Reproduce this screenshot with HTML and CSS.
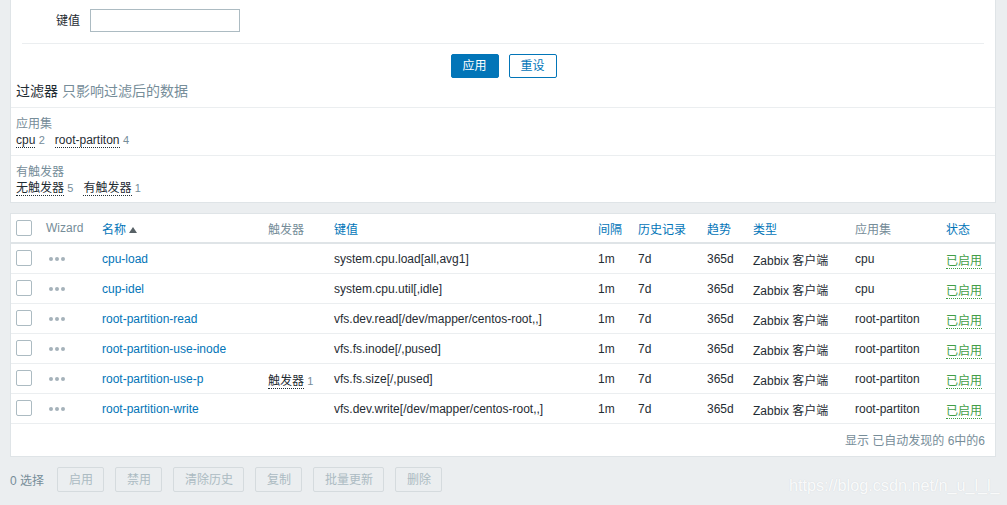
FILE: index.html
```html
<!DOCTYPE html>
<html lang="zh">
<head>
<meta charset="utf-8">
<title>监控项</title>
<link rel="stylesheet" href="styles.css">
</head>
<body>
<div class="page">
  <section class="filter-panel">
    <div class="form-row">
      <label class="form-label">键值</label>
      <input class="form-input" type="text">
    </div>
    <div class="form-sep"></div>
    <div class="form-buttons">
      <button class="btn btn-primary">应用</button>
      <button class="btn btn-alt">重设</button>
    </div>
    <div class="filter-title"><span class="dark">过滤器</span> <span class="muted">只影响过滤后的数据</span></div>
    <div class="subfilter">
      <div class="sub-label">应用集</div>
      <div class="sub-items">
        <span class="sub-item"><span class="dotted">cpu</span> <sup class="cnt">2</sup></span>
        <span class="sub-item"><span class="dotted">root-partiton</span> <sup class="cnt">4</sup></span>
      </div>
    </div>
    <div class="subfilter">
      <div class="sub-label">有触发器</div>
      <div class="sub-items">
        <span class="sub-item"><span class="dotted">无触发器</span> <sup class="cnt">5</sup></span>
        <span class="sub-item"><span class="dotted">有触发器</span> <sup class="cnt">1</sup></span>
      </div>
    </div>
  </section>

  <section class="list-panel">
    <table class="list">
      <colgroup>
        <col class="w-cb"><col class="w-wiz"><col class="w-name"><col class="w-trig"><col class="w-key"><col class="w-int"><col class="w-hist"><col class="w-trend"><col class="w-type"><col class="w-app"><col class="w-status">
      </colgroup>
      <thead>
        <tr>
          <th><span class="cb"></span></th>
          <th class="gray">Wizard</th>
          <th class="blue">名称<span class="arrow"></span></th>
          <th class="gray">触发器</th>
          <th class="blue">键值</th>
          <th class="blue">间隔</th>
          <th class="blue">历史记录</th>
          <th class="blue">趋势</th>
          <th class="blue">类型</th>
          <th class="gray">应用集</th>
          <th class="blue">状态</th>
        </tr>
      </thead>
      <tbody>
        <tr>
          <td class="c-cb"><span class="cb"></span></td><td><span class="dots"><i></i><i></i><i></i></span></td>
          <td class="link">cpu-load</td><td></td><td>system.cpu.load[all,avg1]</td>
          <td>1m</td><td>7d</td><td>365d</td><td>Zabbix 客户端</td><td>cpu</td><td><span class="status">已启用</span></td>
        </tr>
        <tr>
          <td class="c-cb"><span class="cb"></span></td><td><span class="dots"><i></i><i></i><i></i></span></td>
          <td class="link">cup-idel</td><td></td><td>system.cpu.util[,idle]</td>
          <td>1m</td><td>7d</td><td>365d</td><td>Zabbix 客户端</td><td>cpu</td><td><span class="status">已启用</span></td>
        </tr>
        <tr>
          <td class="c-cb"><span class="cb"></span></td><td><span class="dots"><i></i><i></i><i></i></span></td>
          <td class="link">root-partition-read</td><td></td><td>vfs.dev.read[/dev/mapper/centos-root,,]</td>
          <td>1m</td><td>7d</td><td>365d</td><td>Zabbix 客户端</td><td>root-partiton</td><td><span class="status">已启用</span></td>
        </tr>
        <tr>
          <td class="c-cb"><span class="cb"></span></td><td><span class="dots"><i></i><i></i><i></i></span></td>
          <td class="link">root-partition-use-inode</td><td></td><td>vfs.fs.inode[/,pused]</td>
          <td>1m</td><td>7d</td><td>365d</td><td>Zabbix 客户端</td><td>root-partiton</td><td><span class="status">已启用</span></td>
        </tr>
        <tr>
          <td class="c-cb"><span class="cb"></span></td><td><span class="dots"><i></i><i></i><i></i></span></td>
          <td class="link">root-partition-use-p</td><td><span class="dotted">触发器</span> <sup class="cnt">1</sup></td><td>vfs.fs.size[/,pused]</td>
          <td>1m</td><td>7d</td><td>365d</td><td>Zabbix 客户端</td><td>root-partiton</td><td><span class="status">已启用</span></td>
        </tr>
        <tr>
          <td class="c-cb"><span class="cb"></span></td><td><span class="dots"><i></i><i></i><i></i></span></td>
          <td class="link">root-partition-write</td><td></td><td>vfs.dev.write[/dev/mapper/centos-root,,]</td>
          <td>1m</td><td>7d</td><td>365d</td><td>Zabbix 客户端</td><td>root-partiton</td><td><span class="status">已启用</span></td>
        </tr>
      </tbody>
    </table>
    <div class="list-footer">显示 已自动发现的 6中的6</div>
  </section>

  <div class="action-bar">
    <span class="selected">0 选择</span>
    <button class="btn btn-dis">启用</button>
    <button class="btn btn-dis">禁用</button>
    <button class="btn btn-dis">清除历史</button>
    <button class="btn btn-dis">复制</button>
    <button class="btn btn-dis">批量更新</button>
    <button class="btn btn-dis">删除</button>
  </div>
  <div class="watermark">https://blog.csdn.net/n_u_l_l_</div>
</div>
</body>
</html>
```

FILE: styles.css
```css
* { box-sizing: border-box; }
html, body { margin: 0; padding: 0; }
body {
  background: #ebeef0;
  font-family: "Liberation Sans", Arial, "Noto Sans CJK SC", sans-serif;
  font-size: 12px;
  color: #1f2c33;
  width: 1007px;
  height: 505px;
  overflow: hidden;
}
.page { position: relative; padding: 0 11px 0 10px; height: 505px; }

.filter-panel {
  background: #fff;
  border: 1px solid #dfe4e7;
  border-top: none;
  height: 203px;
}
.form-row { display: flex; align-items: center; padding-top: 9px; height: 32px; }
.form-label { width: 69px; text-align: right; margin-right: 10px; font-size: 12px; position: relative; top: -1px; }
.form-input {
  width: 150px; height: 23px; border: 1px solid #acbbc2; background: #fff; margin: 0; padding: 0 4px;
  font: inherit;
}
.form-sep { height: 1px; background: #ebeef0; margin: 11px 11px 0 11px; }
.form-buttons { display: flex; justify-content: center; gap: 10px; margin-top: 10px; height: 24px; padding-left: 1px; }

.btn {
  font-family: inherit; font-size: 12px; height: 24px; padding: 0 10px 0 11px; border-radius: 2px; margin: 0;
  line-height: 22px; cursor: pointer;
}
.btn-primary { background: #0275b8; color: #fff; border: 1px solid #0275b8; width: 48px; padding: 0; }
.btn-alt { background: #fff; color: #0275b8; border: 1px solid #0275b8; width: 48px; padding: 0; }
.btn-dis { background: #ebeef0; color: #acbbc2; border: 1px solid #d5dbde; }

.filter-title { height: 29px; padding: 5px 5px 0; line-height: 16px; font-size: 14px; }
.dark { color: #1f2c33; }
.muted { color: #768d99; }

.subfilter { border-top: 1px solid #ebeef0; padding: 8px 5px 6px; }
.sub-label { line-height: 16px; color: #768d99; }
.sub-items { line-height: 17px; display: flex; gap: 10px; }
.dotted { border-bottom: 1px dotted #1f2c33; }
.cnt { color: #768d99; font-size: 11px; vertical-align: baseline; }

.list-panel {
  background: #fff;
  border: 1px solid #dfe4e7;
  margin-top: 10px;
  height: 244px;
}
.list { border-collapse: collapse; table-layout: fixed; width: 984px; }
.w-cb { width: 30px; } .w-wiz { width: 56px; } .w-name { width: 166px; } .w-trig { width: 66px; }
.w-key { width: 264px; } .w-int { width: 40px; } .w-hist { width: 69px; } .w-trend { width: 46px; }
.w-type { width: 102px; } .w-app { width: 91px; } .w-status { width: 54px; }
.list th {
  text-align: left; font-weight: normal; height: 29px; padding: 0 0 0 5px;
  border-bottom: 2px solid #dfe4e7; white-space: nowrap;
}
.list td {
  height: 30px; padding: 2px 0 0 5px; border-bottom: 1px solid #ebeef0; white-space: nowrap;
}
.list td.c-cb { padding-top: 0; }
.list th.gray { color: #768d99; }
.list th.blue { color: #0275b8; }
.arrow {
  display: inline-block; width: 0; height: 0; margin-left: 3px; vertical-align: 1px;
  border-left: 4px solid transparent; border-right: 4px solid transparent; border-bottom: 6px solid #1f2c33;
  opacity: .75;
}
.cb { display: inline-block; width: 16px; height: 16px; border: 1px solid #acbbc2; border-radius: 2px; vertical-align: middle; background: #fff; }
.dots { display: inline-flex; gap: 2px; padding-left: 3px; vertical-align: middle; position: relative; top: -1px; }
.dots i { display: block; width: 4px; height: 4px; border-radius: 50%; background: #a5b2ba; }
.link { color: #0275b8; }
.status { color: #429e47; border-bottom: 1px dotted #429e47; }

.list-footer { text-align: right; color: #768d99; padding: 10px 10px 0 0; line-height: 15px; }

.action-bar { display: flex; align-items: center; gap: 11px; margin-top: 10px; height: 25px; }
.selected { color: #768d99; margin-right: 2px; }
.action-bar .btn { height: 25px; }

.watermark {
  position: absolute; left: 789px; top: 476px;
  font-size: 16.2px; color: rgba(255,255,255,0.9);
  text-shadow: 0 0 1px rgba(160,170,180,0.4);
  white-space: nowrap;
}
```
